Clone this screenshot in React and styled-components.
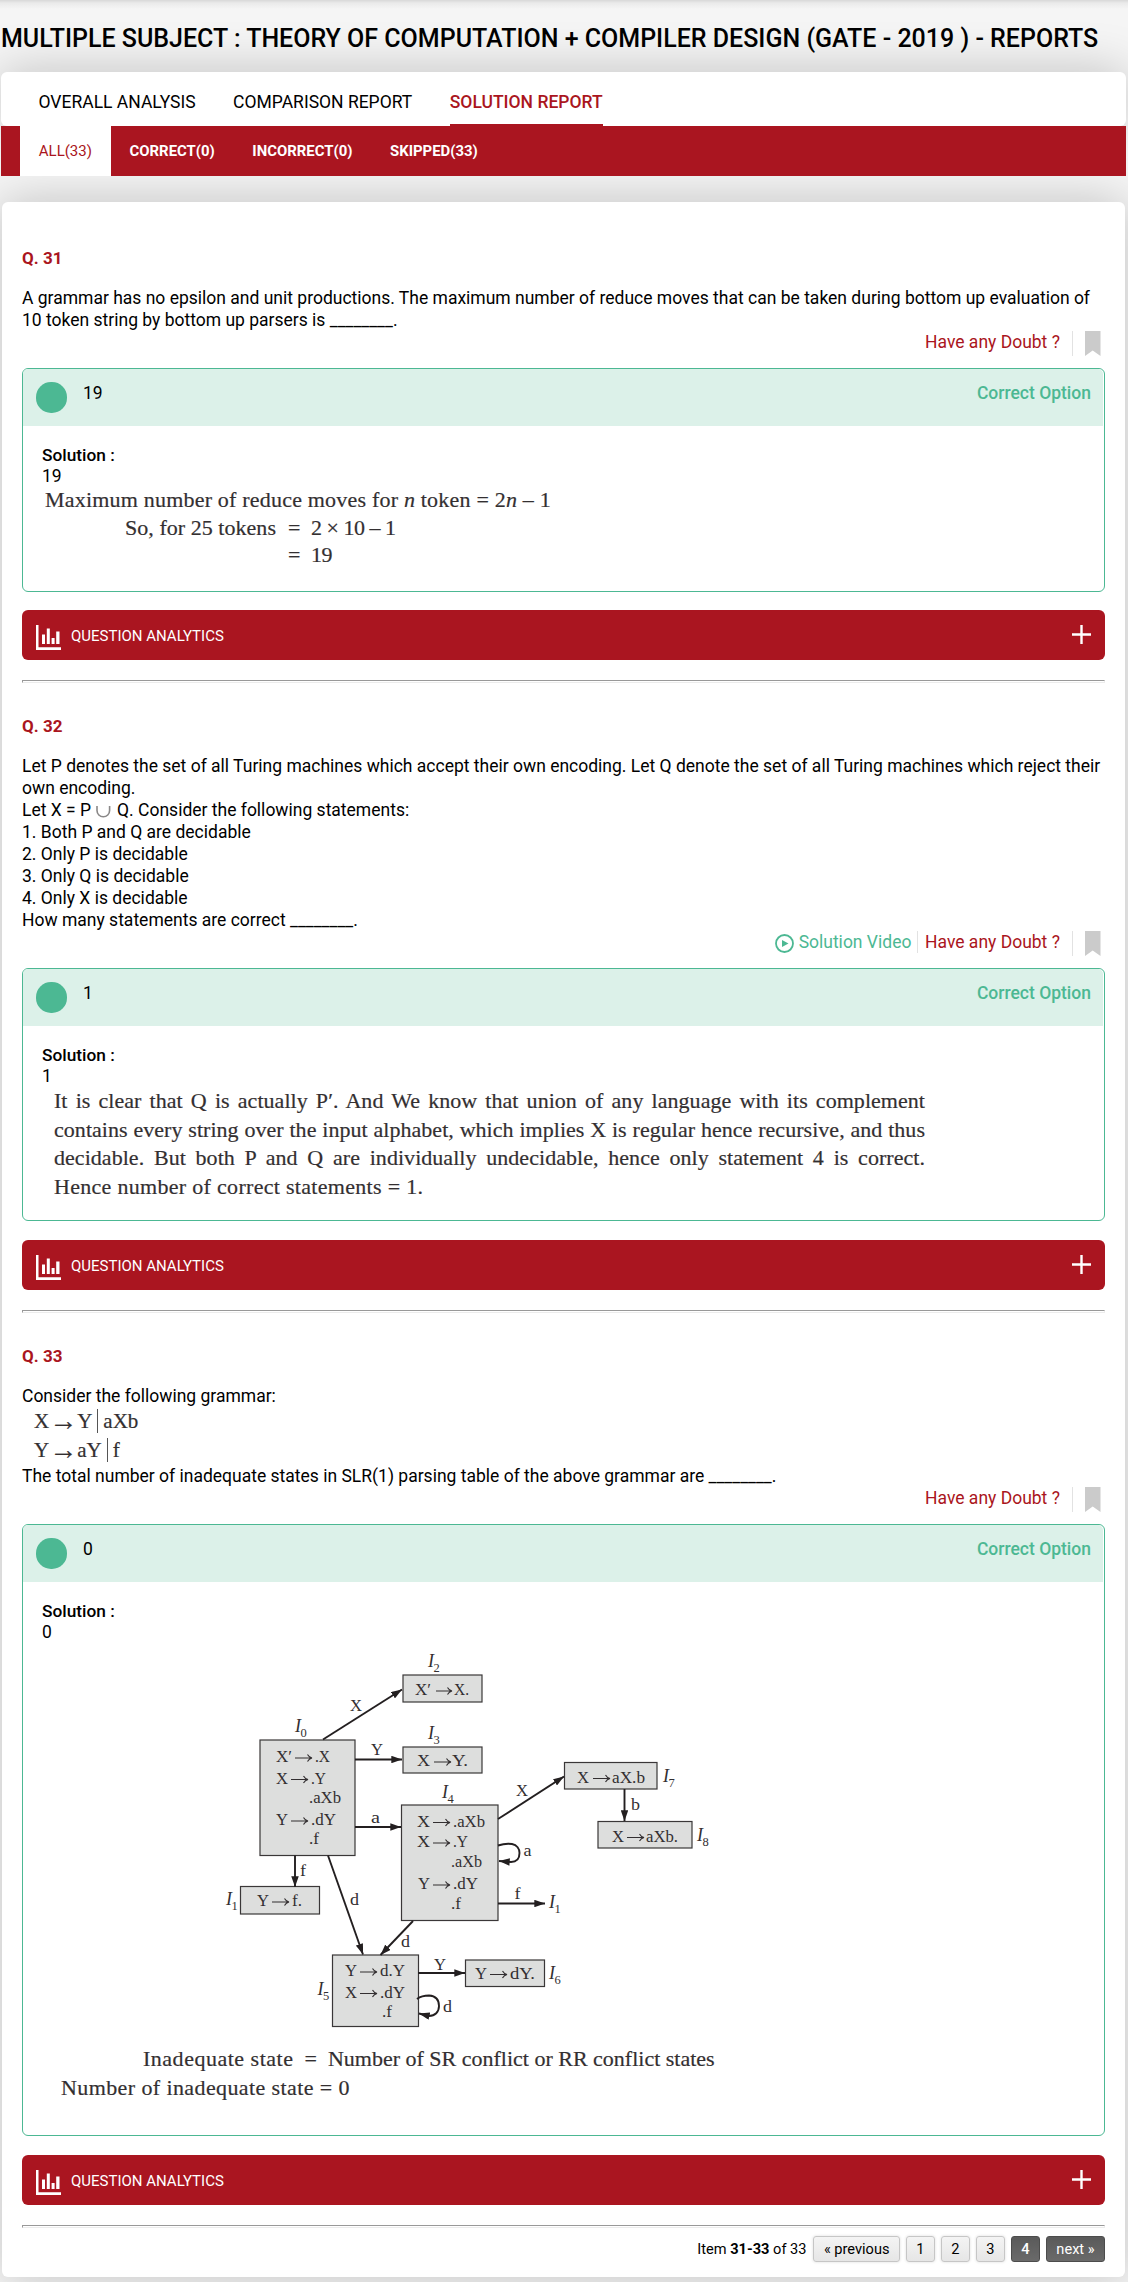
import React from "react";
import styled, { createGlobalStyle, css } from "styled-components";

const RED = "#aa1520";
const GREEN = "#4cb893";
const INK = "#332f31";

const GlobalStyle = createGlobalStyle`
  * { box-sizing: border-box; }
  body {
    margin: 0;
    background: #f5f5f5;
    color: #000;
    font-family: Roboto, "Liberation Sans", sans-serif;
    font-size: 17.5px;
    line-height: 22px;
  }
  p, h1, h2, h3 { margin: 0; }
  svg { display: block; }
`;

const Page = styled.main`
  height: 2282px;
  padding: 23px 2px 0 1px;
  overflow: hidden;
  background: linear-gradient(#d8d8d8, #eaeaea 3px, #f5f5f5 9px, #f5f5f5);
`;

const Title = styled.h1`
  margin-bottom: 18px;
  font-size: 25px;
  font-weight: 500;
  line-height: 31px;
  white-space: nowrap;
`;

const softShadow = css`
  box-shadow: 0 0 50px rgba(0, 0, 0, 0.22);
`;

const Tabs = styled.nav`
  display: flex;
  gap: 37.5px;
  height: 54px;
  padding-left: 37.5px;
  border-radius: 6px;
  background: #fff;
  ${softShadow}
`;

const Tab = styled.span`
  padding-top: 19px;
  color: ${(p) => (p.$active ? RED : "#000")};
  font-weight: ${(p) => (p.$active ? 500 : 400)};
  border-bottom: 2px solid ${(p) => (p.$active ? RED : "transparent")};
`;

const Filters = styled.nav`
  position: relative;
  z-index: 1;
  display: flex;
  height: 50px;
  padding-left: 19px;
  background: ${RED};
`;

const Filter = styled.span`
  padding: 0 18.8px;
  font-size: ${(p) => (p.$active ? 15 : 14.9)}px;
  line-height: 50px;
  color: ${(p) => (p.$active ? RED : "#fff")};
  background: ${(p) => (p.$active ? "#fff" : "transparent")};
  font-weight: ${(p) => (p.$active ? 400 : 700)};
`;

const Card = styled.section`
  margin: 26px 1px 0 1px;
  padding: 45px 20px 15.6px;
  border-radius: 6px;
  background: #fff;
  ${softShadow}
`;

const Number = styled.h2`
  margin-bottom: 18px;
  font-size: 17px;
  font-weight: 700;
  line-height: 22px;
  color: ${RED};
`;

const Cup = styled.svg`
  display: inline-block;
  margin: 0 5px 0 4px;
  vertical-align: -3px;
`;

const Actions = styled.div`
  display: flex;
  justify-content: flex-end;
  height: 25px;
  margin-bottom: 12px;
  padding-right: 4px;
`;

const Doubt = styled.span`
  width: 147px;
  color: ${RED};
`;

const Video = styled.span`
  display: flex;
  gap: 5px;
  height: 22px;
  margin-right: 7px;
  padding-right: 5.6px;
  border-right: 1px solid #e2e2e2;
  color: ${GREEN};
`;

const PlayIcon = styled.svg`
  margin-top: 3px;
`;

const Mark = styled.span`
  padding-left: 12px;
  border-left: 1px solid #e2e2e2;
`;

const AnswerBox = styled.div`
  margin-bottom: 18.3px;
  border: 1px solid ${GREEN};
  border-radius: 6px;
`;

const AnswerHead = styled.div`
  display: flex;
  gap: 16px;
  height: 57px;
  margin-right: 1px;
  padding: 13px 12px 0 13px;
  border-radius: 5px 5px 0 0;
  background: #dcf1e9;
`;

const Dot = styled.i`
  width: 31px;
  height: 31px;
  border-radius: 15px;
  background: ${GREEN};
`;

const CorrectLabel = styled.span`
  margin-left: auto;
  color: ${GREEN};
  font-weight: 500;
`;

const AnswerBody = styled.div`
  padding: 19px 19px 15px;
  line-height: 20px;
`;

const SolutionLabel = styled.h3`
  font-size: 17.3px;
  font-weight: 500;
  line-height: 21px;
`;

const Figure = styled.div`
  height: ${(p) => p.$height}px;
  color: ${INK};
  font-family: "Liberation Serif", serif;
  font-size: 22px;
  line-height: 28px;
  -webkit-text-stroke: 0.2px ${INK};
`;

const Spaced = styled.span`
  letter-spacing: ${(p) => p.$ls}px;
  white-space: nowrap;
`;

const Derivation = styled.div`
  display: grid;
  grid-template-columns: 231px 11px auto;
  grid-template-rows: ${(p) => p.$rows};
  column-gap: 12px;
  align-items: center;
  justify-content: start;
  padding-left: 3px;
  margin-top: -0.5px;
`;

const Full = styled.div`
  grid-column: 1 / -1;
`;

const Right = styled.div`
  text-align: right;
`;

const Paragraph = styled.div`
  width: 871px;
  margin-left: 12px;
  padding-top: 1.5px;
  line-height: 28.4px;
`;

const Line = styled.div`
  letter-spacing: ${(p) => p.$ls ?? 0.04}px;
  text-align-last: ${(p) => (p.$last ? "left" : "justify")};
`;

const Conclusion = styled.div`
  display: flex;
  gap: 11px;
  height: 29px;
  padding-left: ${(p) => p.$indent}px;
  line-height: 29px;
`;

const Bar = styled.div`
  display: flex;
  align-items: center;
  gap: 10px;
  height: 50px;
  padding: 0 14px;
  border-radius: 6px;
  background: ${RED};
  color: #fff;
  font-size: 15px;
`;

const BarText = styled.span`
  padding-top: 2px;
`;

const PlusIcon = styled.svg`
  margin-left: auto;
`;

const Rule = styled.hr`
  height: 3px;
  margin: 20px 0 ${(p) => (p.$last ? 8 : 32)}px;
  border: 1px solid #ececec;
  border-top-color: #999;
  border-left-color: #999;
`;

const Grammar = styled.div`
  height: 58px;
  padding-left: 12px;
  color: ${INK};
  font-family: "Liberation Serif", serif;
  font-size: 21px;
  -webkit-text-stroke: 0.2px ${INK};
`;

const Production = styled.div`
  display: flex;
  align-items: center;
  height: 28.6px;
`;

const Arrow = styled.span`
  width: 28px;
  font-size: 28px;
`;

const Pipe = styled.i`
  width: 1px;
  height: 24px;
  margin: 0 5px;
  background: #555;
`;

const Pager = styled.div`
  display: flex;
  justify-content: flex-end;
  gap: 6px;
  font-size: 14.6px;
  line-height: 26px;
`;

const Summary = styled.span`
  margin-right: 1px;
`;

const PageButton = styled.span`
  min-width: 28.6px;
  height: 26px;
  padding: 0 9.4px;
  border: 1px solid ${(p) => (p.$dark ? "#4c4c4c" : "#c6c6c6")};
  border-radius: 3px;
  background: ${(p) =>
    p.$dark ? "linear-gradient(#5a5a5a, #6a6a6a)" : "linear-gradient(#f4f4f4, #e6e6e6)"};
  box-shadow: ${(p) => (p.$dark ? "none" : "0 0 3px rgba(0,0,0,.14)")};
  color: ${(p) => (p.$dark ? "#fff" : "#000")};
  font-weight: ${(p) => (p.$current ? 500 : 400)};
  line-height: 24px;
  text-align: center;
`;

const DiagramSvg = styled.svg`
  margin-bottom: 4px;
  font-family: "Liberation Serif", serif;
  font-size: 17.5px;
  fill: ${INK};
`;

const STATES = [
  { box: [403, 1675, 79, 27], label: ["2", 428, 1667], rows: [[1695, [["X′", 415, 16], ["→", 436, 16], ["X.", 454, 15]]]] },
  { box: [403, 1747, 79, 26], label: ["3", 428, 1739], rows: [[1766, [["X", 417, 13], ["→", 434, 17], ["Y.", 452, 16]]]] },
  {
    box: [260, 1740, 95, 115.5],
    label: ["0", 295, 1732],
    rows: [
      [1762, [["X′", 276, 16], ["→", 295, 17], [".X", 315, 15]]],
      [1783.5, [["X", 276, 12], ["→", 291, 17], [".Y", 311, 15]]],
      [1803, [[".aXb", 309, 32]]],
      [1825, [["Y", 276, 12], ["→", 291, 17], [".dY", 311, 25]]],
      [1844, [[".f", 309, 10]]],
    ],
  },
  {
    box: [401.5, 1805, 96.5, 115.5],
    label: ["4", 442, 1798],
    rows: [
      [1826.5, [["X", 417, 13], ["→", 433, 17], [".aXb", 453, 32]]],
      [1847, [["X", 417, 13], ["→", 433, 17], [".Y", 453, 15]]],
      [1867, [[".aXb", 451, 31]]],
      [1889, [["Y", 418, 12], ["→", 433, 17], [".dY", 453, 25]]],
      [1909, [[".f", 451, 10]]],
    ],
  },
  { box: [240.5, 1886.5, 79, 27.5], label: ["1", 226, 1905], rows: [[1906, [["Y", 257, 12], ["→", 272, 17], ["f.", 292, 10]]]] },
  {
    box: [332.5, 1955, 86, 71.5],
    label: ["5", 317.5, 1995],
    rows: [
      [1976, [["Y", 345, 12], ["→", 360, 17], ["d.Y", 380, 25]]],
      [1997.5, [["X", 345, 12], ["→", 360, 17], [".dY", 380, 25]]],
      [2017, [[".f", 382, 10]]],
    ],
  },
  { box: [465.5, 1960, 79, 26.5], label: ["6", 549, 1979], rows: [[1978.5, [["Y", 475, 12], ["→", 490, 17], ["dY.", 510, 25]]]] },
  { box: [564.5, 1762.5, 92.5, 26.5], label: ["7", 663, 1782], rows: [[1782.5, [["X", 577, 12], ["→", 593, 17], ["aX.b", 612, 33]]]] },
  { box: [598, 1821.5, 94, 26.5], label: ["8", 697, 1841], rows: [[1841.5, [["X", 612, 12], ["→", 627, 17], ["aXb.", 646, 32]]]] },
];

const EDGES = [
  "M323 1739.5L402 1689.5",
  "M355 1759.5H402",
  "M355 1827H401",
  "M295 1855.5V1887",
  "M328 1855.5L363 1954.5",
  "M413 1921L380.5 1955",
  "M418 1973H465",
  "M498 1819L564 1776.5",
  "M624.5 1789V1821",
  "M498 1845.5C504 1843.5 509 1843.5 512 1844C517 1845 519.5 1849 519.5 1853C519.5 1859 516 1862 511 1862L499 1861",
  "M498 1903.5H545",
  "M417 1999C421 1996 425 1995.5 429 1995.5C436 1996 439 2000 439 2006C439 2012 435 2016 429 2016L419 2013.5",
];

const EDGE_LABELS = [
  ["X", 350, 1711, 12],
  ["Y", 371, 1755, 12],
  ["a", 371, 1823, 9],
  ["f", 300, 1875.5, 6],
  ["d", 350, 1904.5, 9],
  ["d", 401, 1946.5, 9],
  ["Y", 434, 1969.5, 12],
  ["X", 516, 1796, 12],
  ["b", 631, 1809.5, 9],
  ["a", 523.5, 1856, 8],
  ["f", 514.5, 1898.5, 6],
  ["d", 443, 2011.5, 9],
];

const StateName = ({ n, x, y }) => (
  <g>
    <text x={x} y={y} fontStyle="italic" fontSize="18">I</text>
    <text x={x + 5.5} y={y + 4.5} fontSize="12.5">{n}</text>
  </g>
);

const Piece = ({ t, x, y, w }) =>
  t === "→" ? (
    <path
      d={`M${x} ${y - 4}h${w}m-4.5 -3.5q1.5 2.8 4.5 3.5q-3 .7 -4.5 3.5`}
      fill="none"
      stroke={INK}
      strokeWidth="1.1"
    />
  ) : (
    <text x={x} y={y} textLength={w} lengthAdjust="spacingAndGlyphs">{t}</text>
  );

const StateDiagram = () => (
  <DiagramSvg width="700" height="398" viewBox="42 1642 700 398">
    <defs>
      <marker id="head" viewBox="0 0 10 7" refX="10" refY="3.5" markerWidth="11" markerHeight="7.5" markerUnits="userSpaceOnUse" orient="auto">
        <path d="M0 0L10 3.5L0 7Z" fill="#231f20" />
      </marker>
    </defs>
    {STATES.map((s) => (
      <g key={s.label[0]}>
        <rect x={s.box[0]} y={s.box[1]} width={s.box[2]} height={s.box[3]} fill="#dddedd" stroke="#3a3738" strokeWidth="1.2" />
        <StateName n={s.label[0]} x={s.label[1]} y={s.label[2]} />
        {s.rows.map(([y, parts]) =>
          parts.map(([t, x, w]) => <Piece key={`${x}-${y}`} t={t} x={x} y={y} w={w} />)
        )}
      </g>
    ))}
    {EDGES.map((d) => (
      <path key={d} d={d} fill="none" stroke="#231f20" strokeWidth="1.9" markerEnd="url(#head)" />
    ))}
    {EDGE_LABELS.map(([t, x, y, w]) => <Piece key={`${x}-${y}`} t={t} x={x} y={y} w={w} />)}
    <StateName n="1" x={549} y={1908} />
  </DiagramSvg>
);

const Bookmark = () => (
  <svg width="16" height="25" viewBox="0 0 16 25">
    <path d="M0 0H15.5V25L7.7 19.5L0 25Z" fill="#cbcbcb" />
  </svg>
);

const ChartIcon = () => (
  <svg width="25" height="25" viewBox="0 0 25 25" fill="#fff">
    <path d="M0 0H2.5V22.3H25V25H0Z" />
    <path d="M6 9.5H9V19H6ZM10.8 3.5H13.8V19H10.8ZM15.6 13H18.6V19H15.6ZM20.2 6.5H23.5V19H20.2Z" />
  </svg>
);

const ChartSlot = styled.span`
  padding-top: 5px;
`;

const Analytics = () => (
  <Bar>
    <ChartSlot><ChartIcon /></ChartSlot>
    <BarText>QUESTION ANALYTICS</BarText>
    <PlusIcon width="19" height="19" viewBox="0 0 19 19">
      <path d="M9.5 0V19M0 9.5H19" stroke="#fff" strokeWidth="2.4" />
    </PlusIcon>
  </Bar>
);

const Question = ({ number, answer, video, figureHeight, figure, last, children }) => (
  <article>
    <Number>Q. {number}</Number>
    {children}
    <Actions>
      {video && (
        <Video>
          <PlayIcon width="19" height="19" viewBox="0 0 19 19">
            <circle cx="9.5" cy="9.5" r="8.5" fill="none" stroke={GREEN} strokeWidth="1.8" />
            <path d="M7 6L13.5 9.5L7 13Z" fill={GREEN} />
          </PlayIcon>
          Solution Video
        </Video>
      )}
      <Doubt>Have any Doubt ?</Doubt>
      <Mark><Bookmark /></Mark>
    </Actions>
    <AnswerBox>
      <AnswerHead>
        <Dot />
        <span>{answer}</span>
        <CorrectLabel>Correct Option</CorrectLabel>
      </AnswerHead>
      <AnswerBody>
        <SolutionLabel>Solution :</SolutionLabel>
        <p>{answer}</p>
        <Figure $height={figureHeight}>{figure}</Figure>
      </AnswerBody>
    </AnswerBox>
    <Analytics />
    <Rule $last={last} />
  </article>
);

export default function App() {
  return (
    <Page>
      <GlobalStyle />
      <Title>MULTIPLE SUBJECT : THEORY OF COMPUTATION + COMPILER DESIGN (GATE - 2019 ) - REPORTS</Title>
      <Tabs>
        <Tab>OVERALL ANALYSIS</Tab>
        <Tab>COMPARISON REPORT</Tab>
        <Tab $active>SOLUTION REPORT</Tab>
      </Tabs>
      <Filters>
        <Filter $active>ALL(33)</Filter>
        <Filter>CORRECT(0)</Filter>
        <Filter>INCORRECT(0)</Filter>
        <Filter>SKIPPED(33)</Filter>
      </Filters>
      <Card>
        <Question
          number={31}
          answer="19"
          figureHeight={90}
          figure={
            <Derivation $rows="28px 29.5px 24px">
              <Full><Spaced $ls={0.2}>Maximum number of reduce moves for <i>n</i> token = 2<i>n</i> – 1</Spaced></Full>
              <Right><Spaced $ls={0.04}>So, for 25 tokens</Spaced></Right>
              <span>=</span>
              <Spaced $ls={-0.5}>2 × 10 – 1</Spaced>
              <span />
              <span>=</span>
              <Spaced $ls={-0.5}>19</Spaced>
            </Derivation>
          }
        >
          <p>
            A grammar has no epsilon and unit productions. The maximum number of reduce moves that can be taken during bottom up evaluation of
            <br />
            10 token string by bottom up parsers is ________.
          </p>
        </Question>
        <Question
          number={32}
          answer="1"
          video
          figureHeight={119.7}
          figure={
            <Paragraph>
              <Line>It is clear that Q is actually P′. And We know that union of any language with its complement</Line>
              <Line>contains every string over the input alphabet, which implies X is regular hence recursive, and thus</Line>
              <Line>decidable. But both P and Q are individually undecidable, hence only statement 4 is correct.</Line>
              <Line $last $ls={0.3}>Hence number of correct statements = 1.</Line>
            </Paragraph>
          }
        >
          <p>
            Let P denotes the set of all Turing machines which accept their own encoding. Let Q denote the set of all Turing machines which reject their
            <br />
            own encoding.
            <br />
            Let X = P
            <Cup width="17" height="14" viewBox="0 0 17 14">
              <path d="M2 1V5.5A6.3 6.3 0 0 0 14.6 5.5V1" fill="none" stroke="#8a8888" strokeWidth="1.6" />
            </Cup>
            Q. Consider the following statements:
            <br />
            1. Both P and Q are decidable
            <br />
            2. Only P is decidable
            <br />
            3. Only Q is decidable
            <br />
            4. Only X is decidable
            <br />
            How many statements are correct ________.
          </p>
        </Question>
        <Question
          number={33}
          answer="0"
          last
          figureHeight={478.6}
          figure={
            <>
              <StateDiagram />
              <Conclusion $indent={101}>
                <Spaced $ls={0.51}>Inadequate state</Spaced>
                <span>=</span>
                <Spaced $ls={0}>Number of SR conflict or RR conflict states</Spaced>
              </Conclusion>
              <Conclusion $indent={19}>
                <Spaced $ls={0.4}>Number of inadequate state = 0</Spaced>
              </Conclusion>
            </>
          }
        >
          <p>Consider the following grammar:</p>
          <Grammar>
            <Production>X<Arrow>→</Arrow>Y<Pipe />aXb</Production>
            <Production>Y<Arrow>→</Arrow>aY<Pipe />f</Production>
          </Grammar>
          <p>The total number of inadequate states in SLR(1) parsing table of the above grammar are ________.</p>
        </Question>
        <Pager>
          <Summary>Item <b>31-33</b> of 33</Summary>
          <PageButton>« previous</PageButton>
          <PageButton>1</PageButton>
          <PageButton>2</PageButton>
          <PageButton>3</PageButton>
          <PageButton $dark $current>4</PageButton>
          <PageButton $dark>next »</PageButton>
        </Pager>
      </Card>
    </Page>
  );
}
